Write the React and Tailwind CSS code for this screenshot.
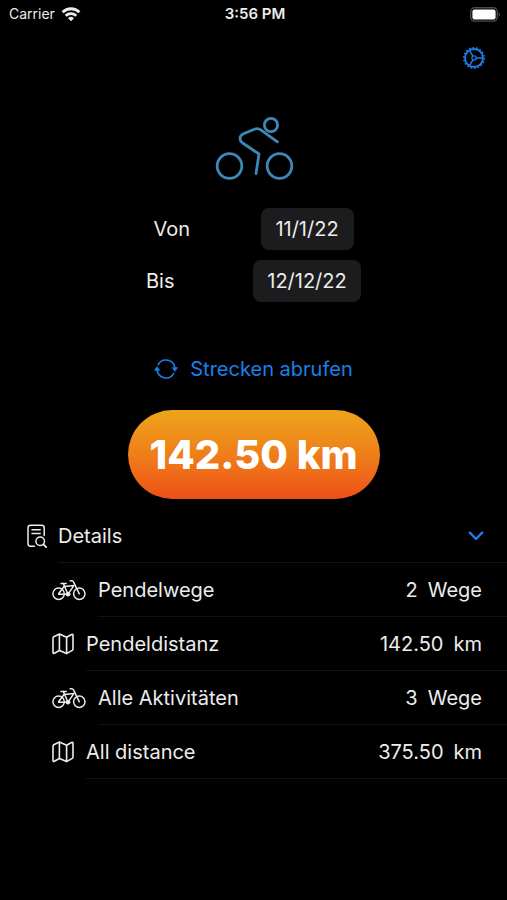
import { useState } from 'react';

const rows = [
    { icon: 'bike', label: 'Pendelwege', value: '2', unit: 'Wege' },
    { icon: 'map', label: 'Pendeldistanz', value: '142.50', unit: 'km' },
    { icon: 'bike', label: 'Alle Aktivitäten', value: '3', unit: 'Wege' },
    { icon: 'map', label: 'All distance', value: '375.50', unit: 'km' },
];

function WifiIcon() {
    return (
        <svg viewBox="0 0 20 15" className="h-[15px] w-5" fill="none" stroke="currentColor" strokeWidth="2.8">
            <path d="M1.6 5.2a12 12 0 0 1 16.8 0" />
            <path d="M4.7 8.8a7.7 7.7 0 0 1 10.6 0" />
            <path d="M10 14.2 7 11.2a4.3 4.3 0 0 1 6 0z" fill="currentColor" stroke="none" />
        </svg>
    );
}

function BatteryIcon() {
    return (
        <svg viewBox="0 0 31 15" className="h-[15px] w-[31px]">
            <rect x="0.7" y="0.7" width="26.6" height="13.4" rx="4" fill="none" stroke="#4b4b4d" strokeWidth="1.4" />
            <rect x="2.4" y="2.4" width="23.2" height="10" rx="2.2" fill="#fff" />
            <path d="M28.7 5.2c1.8.7 1.8 3.7 0 4.4z" fill="#4b4b4d" />
        </svg>
    );
}

function GearIcon() {
    return (
        <svg viewBox="0 0 24 24" className="h-6 w-6" fill="none" stroke="currentColor">
            <circle cx="12" cy="12" r="10.2" strokeWidth="1.6" strokeDasharray="1.7 1.86" />
            <circle cx="12" cy="12" r="9" strokeWidth="1.8" />
            <circle cx="12" cy="12" r="2.1" strokeWidth="1.3" />
            <path d="M14.1 12h6.6M10.9 10.2 7.7 4.6M10.9 13.8l-3.2 5.6" strokeWidth="1.5" />
        </svg>
    );
}

function CyclistIcon() {
    return (
        <svg viewBox="-2 0 80 64" className="h-16 w-20" fill="none" stroke="#3f87b7" strokeWidth="2.8" strokeLinecap="round" strokeLinejoin="round">
            <circle cx="13.5" cy="49" r="12.3" />
            <circle cx="63.5" cy="49" r="12.3" />
            <circle cx="55" cy="8" r="6.6" />
            <path d="M61.4 24.8 44.8 12.9Q42.4 11 39 12L27.5 16.7Q24 18.4 24 21.4 24 24 26.6 26L43 37 40 56.5" />
        </svg>
    );
}

function SyncIcon() {
    return (
        <svg viewBox="0 0 25 22" className="h-[22px] w-6" fill="none" stroke="currentColor" strokeWidth="1.6" strokeLinecap="round">
            <path d="M4.4 6.4a9.3 9.3 0 0 1 17.4 4.2" />
            <path d="M20.6 15.6A9.3 9.3 0 0 1 3.2 11.4" />
            <path d="M.5 12.2 3.2 8.4l2.7 3.8zM24.5 9.8l-2.7 3.8-2.7-3.8z" fill="currentColor" strokeWidth="0.6" strokeLinejoin="round" />
        </svg>
    );
}

function DocSearchIcon() {
    return (
        <svg viewBox="0 0 20 24" className="h-6 w-5" fill="none" stroke="currentColor" strokeWidth="1.5" strokeLinecap="round">
            <path d="M7.4 22.2H3.6Q1 22.2 1 19.6V3.8Q1 1.2 3.6 1.2h11Q17.2 1.2 17.2 3.8v7.8" />
            <path d="M5 5.7h8.2M5 9.4h8.2" />
            <circle cx="13.2" cy="17.2" r="4.3" />
            <path d="m16.4 20.4 2.8 2.8" strokeWidth="1.8" />
        </svg>
    );
}

function BikeIcon() {
    return (
        <svg viewBox="0 0 34 22" className="h-[22px] w-[34px]" fill="none" stroke="currentColor" strokeWidth="1.5" strokeLinecap="round" strokeLinejoin="round">
            <circle cx="6.6" cy="14.8" r="5.7" />
            <circle cx="27.3" cy="14.8" r="5.7" />
            <path d="M6.6 14.8 12.4 7 16 15.2H6.6M12.4 7.6 22 6.4 16 15.2M12.4 7l-1.1-2.6M9 4.4h5.2" />
            <path d="m27.3 14.8-5.8-12c-.4-.9-.9-1.1-1.8-1.1h-1.5" />
            <circle cx="16" cy="15.2" r="1.9" fill="currentColor" strokeWidth="1" />
        </svg>
    );
}

function MapIcon() {
    return (
        <svg viewBox="0 0 22 22" className="h-[22px] w-[22px]" fill="none" stroke="currentColor" strokeWidth="1.6" strokeLinejoin="round">
            <path d="M1 5.2Q1 4.2 1.8 3.7L7.4 1.1l7.2 3.1 5-2.7Q21 1 21 2.3v13.6q0 1-.8 1.5l-5.6 3.2-7.2-3.1-5 2.7Q1 20.7 1 19.3z" />
            <path d="M7.4 1.1v16.4M14.6 4.2v16.4" />
        </svg>
    );
}

function DateField({ id, label, value, onChange, width }) {
    return (
        <div className="flex items-center justify-center">
            <label htmlFor={id} className="w-[107px]">{label}</label>
            <input
                id={id}
                type="text"
                value={value}
                onChange={(e) => onChange(e.target.value)}
                className={`h-[42px] rounded-lg bg-[#1c1c1e] text-center ${width}`}
            />
        </div>
    );
}

export default function App() {
    const [from, setFrom] = useState('11/1/22');
    const [to, setTo] = useState('12/12/22');
    const [open, setOpen] = useState(true);

    return (
        <div className="min-h-screen bg-black font-['Inter','Liberation_Sans',sans-serif] text-xl text-[#ececec]">
            {/* Status bar */}
            <header className="grid h-7 grid-cols-3 items-center pr-[6px] pl-[9px] text-sm">
                <div className="flex items-center gap-1.5">
                    <span>Carrier</span>
                    <WifiIcon />
                </div>
                <div className="text-center text-[15px] font-semibold">3:56 PM</div>
                <div className="flex justify-end">
                    <BatteryIcon />
                </div>
            </header>

            <nav className="flex justify-end px-[21px] pt-[18px]">
                <button type="button" aria-label="Einstellungen" className="text-[#1c7fe6]">
                    <GearIcon />
                </button>
            </nav>

            <main>
                <div className="flex justify-center pt-[47px]">
                    <CyclistIcon />
                </div>

                <div className="flex flex-col gap-[10px] pt-[27px]">
                    <DateField id="from" label="Von" value={from} onChange={setFrom} width="w-[93px]" />
                    <DateField id="to" label="Bis" value={to} onChange={setTo} width="w-[108px]" />
                </div>

                <div className="flex flex-col items-center gap-[27px] pt-[53px]">
                    <button type="button" className="flex items-center gap-3 text-[#1c7fe6]">
                        <SyncIcon />
                        Strecken abrufen
                    </button>
                    <div className="flex h-[89px] w-[252px] items-center justify-center rounded-full bg-linear-to-b from-[#eca51b] to-[#ee4f17] text-[40px] font-extrabold text-white">
                        142.50 km
                    </div>
                </div>

                <section className="pt-[10px] pl-[27px]">
                    <button
                        type="button"
                        aria-expanded={open}
                        onClick={() => setOpen(!open)}
                        className="flex h-[54px] w-full items-center gap-[11px] text-left"
                    >
                        <DocSearchIcon />
                        <span className="flex h-full flex-1 items-center justify-between border-b border-[#121213] pr-[23px]">
                            Details
                            <svg viewBox="0 0 16 10" className="h-[10px] w-4" fill="none" stroke="#1c7fe6" strokeWidth="2.4" strokeLinecap="round" strokeLinejoin="round">
                                <path d="m1.8 1.6 6.2 6.4 6.2-6.4" />
                            </svg>
                        </span>
                    </button>
                    {open && (
                        <ul className="pl-[25px]">
                            {rows.map((row) => (
                                <li key={row.label} className="flex h-[54px] items-center gap-3">
                                    {row.icon === 'bike' ? <BikeIcon /> : <MapIcon />}
                                    <div className="flex h-full flex-1 items-center justify-between border-b border-[#121213] pr-[25px]">
                                        <span>{row.label}</span>
                                        <span className="flex gap-[10px]">
                                            <span>{row.value}</span>
                                            <span>{row.unit}</span>
                                        </span>
                                    </div>
                                </li>
                            ))}
                        </ul>
                    )}
                </section>
            </main>
        </div>
    );
}
